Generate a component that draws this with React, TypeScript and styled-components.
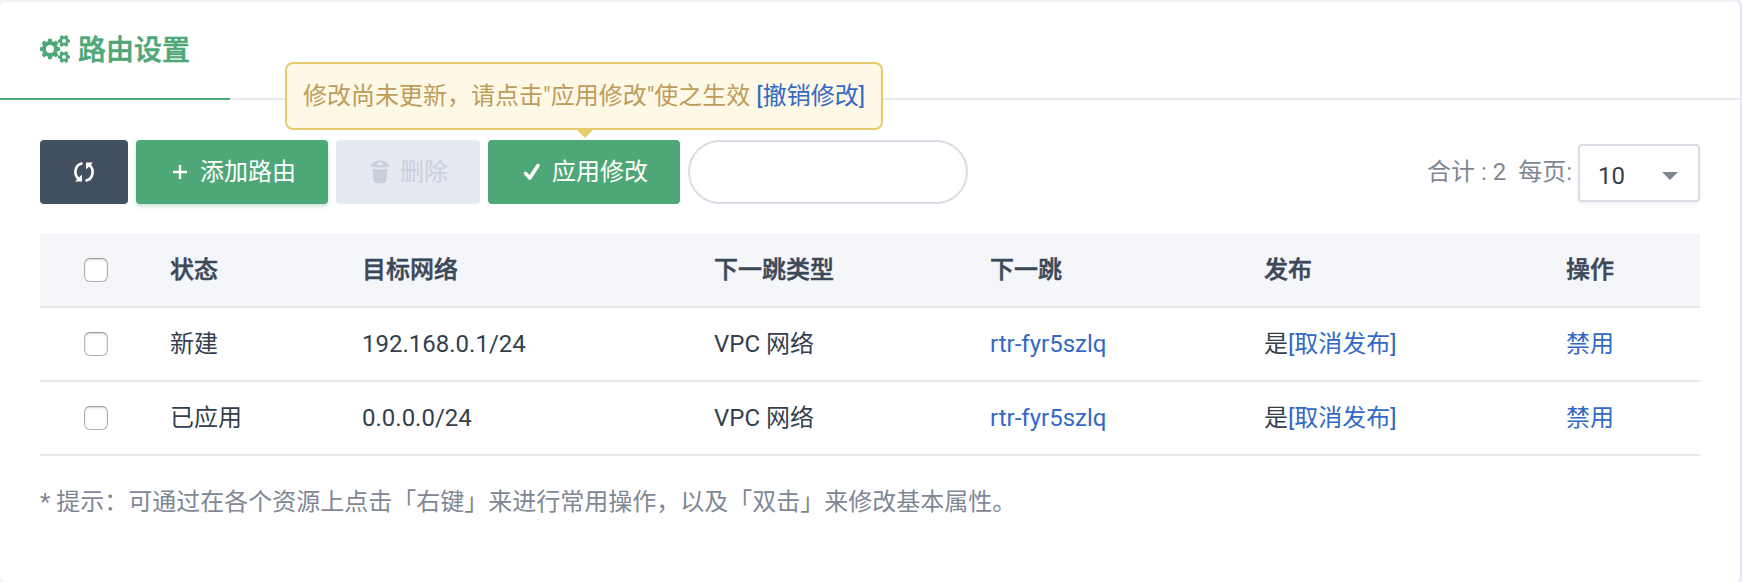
import React from 'react';
import styled, { createGlobalStyle, css } from 'styled-components';

const GlobalStyle = createGlobalStyle`
  * { box-sizing: border-box; }
  body {
    margin: 0;
    background: #f1f3f8;
    color: #343f4e;
    font-family: Roboto, 'Noto Sans CJK SC', sans-serif;
    font-size: 24px;
    line-height: 36px;
  }
`;

const Card = styled.main`
  width: 1742px;
  height: 580px;
  margin-top: 2px;
  background: #fff;
  border-right: 2px solid #e3e6ee;
  border-radius: 6px;
`;

const Tabs = styled.header`
  display: flex;
  height: 98px;
  border-bottom: 2px solid #e5e9ee;
`;

const Tab = styled.div`
  display: flex;
  align-items: flex-start;
  gap: 8px;
  width: 230px;
  height: 98px;
  padding: 29px 0 0 40px;
  border-bottom: 2px solid #4ea776;
  color: #4ea776;
  font-size: 28px;
  font-weight: 500;
  -webkit-text-stroke: 0.5px currentColor;
  line-height: 40px;
  white-space: nowrap;
`;

const TabIcon = styled.svg`
  width: 30px;
  height: 28px;
  margin-top: 4px;
`;

const Body = styled.section`
  padding: 40px 40px 0 40px;
`;

const Toolbar = styled.div`
  display: flex;
  gap: 8px;
  height: 64px;
`;

const Button = styled.button<{ $tone: 'dark' | 'green' | 'disabled'; $width: number; $raised?: boolean }>`
  position: relative;
  display: flex;
  align-items: center;
  justify-content: center;
  gap: 12px;
  width: ${p => p.$width}px;
  height: 64px;
  padding: 0;
  border: 0;
  border-radius: 4px;
  font: inherit;
  color: ${p => (p.$tone === 'disabled' ? '#c9d0dc' : '#fff')};
  background: ${p => ({ dark: '#435062', green: '#4ea776', disabled: '#e5e9f1' })[p.$tone]};
  ${p => p.$raised && css`box-shadow: 0 2px 4px rgba(78, 167, 118, 0.35);`}
`;

const ButtonIcon = styled.svg<{ $labelled?: boolean }>`
  width: 20px;
  height: 24px;
  flex: none;
  ${p => p.$labelled && css`margin: 0 -2px 0 2px;`}
`;

const Tip = styled.div`
  position: absolute;
  left: 50%;
  bottom: 74px;
  width: 598px;
  height: 68px;
  margin-left: -299px;
  padding: 14px 16px;
  border: 2px solid #e6cc6b;
  border-radius: 8px;
  background: #fef8e6;
  color: #bd9c5c;
  text-align: left;
  white-space: nowrap;

  &::after {
    content: '';
    position: absolute;
    top: 66px;
    left: 50%;
    margin-left: -7px;
    border: 8px solid transparent;
    border-top-color: #e6cc6b;
    border-bottom: 0;
  }
`;

const Link = styled.a`
  color: #3369c5;
`;

const Search = styled.input`
  width: 280px;
  height: 64px;
  padding: 0 30px;
  border: 2px solid #d8dde6;
  border-radius: 32px;
  background: #fff;
  font: inherit;
`;

const Pager = styled.div`
  display: flex;
  margin: 4px 0 0 auto;
  color: #7f8794;
  line-height: 56px;
  white-space: pre;
`;

const PageSize = styled.div`
  display: flex;
  align-items: center;
  justify-content: space-between;
  width: 122px;
  height: 58px;
  margin-left: 6px;
  padding: 6px 20px 0 18px;
  border: 2px solid #d8dde6;
  border-radius: 4px;
  box-shadow: 0 2px 4px rgba(67, 80, 98, 0.08);
  color: #343f4e;
`;

const Caret = styled.span`
  border: 8px solid transparent;
  border-top-color: #7d8695;
  border-bottom: 0;
`;

const Table = styled.div`
  margin-top: 30px;
`;

const Row = styled.div<{ $head?: boolean }>`
  display: grid;
  grid-template-columns: 130px 192px 352px 276px 274px 302px 1fr;
  align-items: center;
  height: 74px;
  border-bottom: 2px solid #e7eaec;
  ${p => p.$head && css`
    background: #f5f6fa;
    color: #3b4858;
    font-weight: 500;
    -webkit-text-stroke: 0.5px currentColor;
  `}
`;

const Check = styled.input`
  appearance: none;
  width: 24px;
  height: 24px;
  margin: 0 0 0 44px;
  border: 1px solid #b0b0b0;
  border-top-color: #999;
  border-radius: 6px;
  background: #fff;
  box-shadow: inset 0 1px 2px rgba(0, 0, 0, 0.16);
`;

const Hint = styled.p`
  margin: 28px 0 0;
  color: #7f8794;
`;

// Outline of a toothed wheel with a round hole, drawn with the even-odd rule.
function gear(cx: number, cy: number, outer: number, root: number, hole: number, teeth: number, turn = 0) {
  const step = (Math.PI * 2) / teeth;
  const points: string[] = [];
  for (let i = 0; i < teeth; i++) {
    const a = i * step + turn;
    [[-0.32, root], [-0.23, outer], [0.23, outer], [0.32, root]].forEach(([t, r]) => {
      points.push(`${(cx + r * Math.cos(a + t * step)).toFixed(2)} ${(cy + r * Math.sin(a + t * step)).toFixed(2)}`);
    });
  }
  return `M${points.join('L')}ZM${cx - hole} ${cy}a${hole} ${hole} 0 1 0 ${hole * 2} 0a${hole} ${hole} 0 1 0 ${-hole * 2} 0Z`;
}

const columns = ['状态', '目标网络', '下一跳类型', '下一跳', '发布', '操作'];
const routes = [
  { status: '新建', target: '192.168.0.1/24' },
  { status: '已应用', target: '0.0.0.0/24' },
];

export default function App() {
  return (
    <>
      <GlobalStyle />
      <Card>
        <Tabs>
          <Tab>
            <TabIcon viewBox="0 0 30 28" fill="currentColor" stroke="none" fillRule="evenodd">
              <path d={gear(10, 14, 10.3, 8, 4, 8)} />
              <path d={gear(24, 6, 6.3, 4.7, 2, 6)} />
              <path d={gear(24, 22, 6.3, 4.7, 2, 6)} />
            </TabIcon>
            路由设置
          </Tab>
        </Tabs>
        <Body>
          <Toolbar>
            <Button $tone="dark" $width={88} aria-label="刷新">
              <ButtonIcon viewBox="0 0 20 24" fill="none" stroke="currentColor" strokeWidth="2.6">
                <path d="M8.500 3.200C.5 4.500-.5 14.500 4.500 19M11.500 20.800C19.500 19.500 20.500 9.500 15.500 5" />
                <path d="M1 21.500h7v-7zM19 2.500h-7v7z" fill="currentColor" stroke="none" />
              </ButtonIcon>
            </Button>
            <Button $tone="green" $width={192} $raised>
              <ButtonIcon $labelled viewBox="0 0 20 24" stroke="currentColor" strokeWidth="2.4">
                <path d="M3 12h14M10 5v14" />
              </ButtonIcon>
              添加路由
            </Button>
            <Button $tone="disabled" $width={144}>
              <ButtonIcon $labelled viewBox="0 0 20 24" fill="currentColor" fillRule="evenodd">
                <path d="M1 6.500C1 3 5 .5 10 .5s9 2.500 9 6c-3 1.600-15 1.600-18 0zM6.500 4.500c2 1 5 1 7 0C12.500 2.500 11.500 2 10 2s-2.500.5-3.500 2.500z" />
                <path d="M2.500 8.800c4 1 11 1 15 0L16.200 21.500c-.2 1.300-2.700 2-6.200 2s-6-.7-6.200-2z" />
              </ButtonIcon>
              删除
            </Button>
            <Button $tone="green" $width={192}>
              <ButtonIcon $labelled viewBox="0 0 20 24" fill="none" stroke="currentColor" strokeWidth="3.600" strokeLinecap="round" strokeLinejoin="round">
                <path d="M3.600 13.500l4.200 4.500L16 5.500" />
              </ButtonIcon>
              应用修改
              <Tip>
                修改尚未更新，请点击"应用修改"使之生效 <Link>[撤销修改]</Link>
              </Tip>
            </Button>
            <Search />
            <Pager>
              {'合计 : 2  每页:'}
              <PageSize>
                10
                <Caret />
              </PageSize>
            </Pager>
          </Toolbar>
          <Table>
            <Row $head>
              <Check type="checkbox" />
              {columns.map(c => <span key={c}>{c}</span>)}
            </Row>
            {routes.map(r => (
              <Row key={r.target}>
                <Check type="checkbox" />
                <span>{r.status}</span>
                <span>{r.target}</span>
                <span>VPC 网络</span>
                <Link>rtr-fyr5szlq</Link>
                <span>是<Link>[取消发布]</Link></span>
                <Link>禁用</Link>
              </Row>
            ))}
          </Table>
          <Hint>* 提示：可通过在各个资源上点击「右键」来进行常用操作，以及「双击」来修改基本属性。</Hint>
        </Body>
      </Card>
    </>
  );
}
